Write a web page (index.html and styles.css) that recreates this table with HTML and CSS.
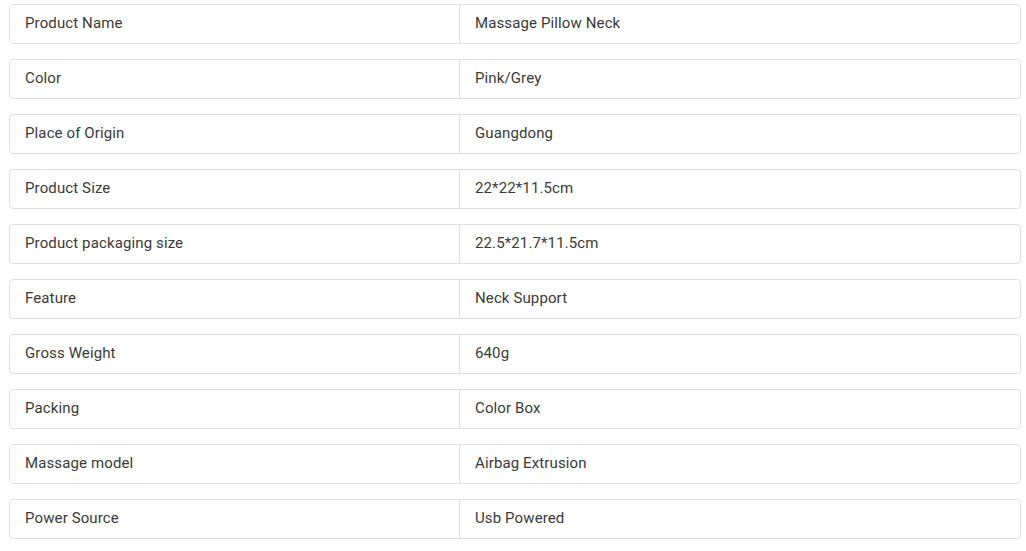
FILE: index.html
```html
<!DOCTYPE html>
<html>
<head>
<meta charset="utf-8">
<link rel="stylesheet" href="styles.css">
</head>
<body>
<div class="specs">
  <div class="row"><div class="key">Product Name</div><div class="val">Massage Pillow Neck</div></div>
  <div class="row"><div class="key">Color</div><div class="val">Pink/Grey</div></div>
  <div class="row"><div class="key">Place of Origin</div><div class="val">Guangdong</div></div>
  <div class="row"><div class="key">Product Size</div><div class="val">22*22*11.5cm</div></div>
  <div class="row"><div class="key">Product packaging size</div><div class="val">22.5*21.7*11.5cm</div></div>
  <div class="row"><div class="key">Feature</div><div class="val">Neck Support</div></div>
  <div class="row"><div class="key">Gross Weight</div><div class="val">640g</div></div>
  <div class="row"><div class="key">Packing</div><div class="val">Color Box</div></div>
  <div class="row"><div class="key">Massage model</div><div class="val">Airbag Extrusion</div></div>
  <div class="row"><div class="key">Power Source</div><div class="val">Usb Powered</div></div>
</div>
</body>
</html>
```
FILE: styles.css
```css
html, body {
  margin: 0;
  padding: 0;
  background: #fff;
}
body {
  font-family: Roboto, "Liberation Sans", sans-serif;
  font-size: 15px;
  letter-spacing: 0.12px;
  color: #3a3a3a;
}
.specs {
  display: flex;
  flex-direction: column;
  gap: 15px;
  padding: 4px 5px 0 9px;
}
.row {
  display: flex;
  height: 40px;
  box-sizing: border-box;
  border: 1px solid #e0e0e0;
  border-radius: 4px;
}
.key {
  width: 450px;
  box-sizing: border-box;
  border-right: 1px solid #e0e0e0;
  padding: 0 15px 2px;
  display: flex;
  align-items: center;
}
.val {
  flex: 1;
  padding: 0 15px 2px;
  display: flex;
  align-items: center;
}
```
